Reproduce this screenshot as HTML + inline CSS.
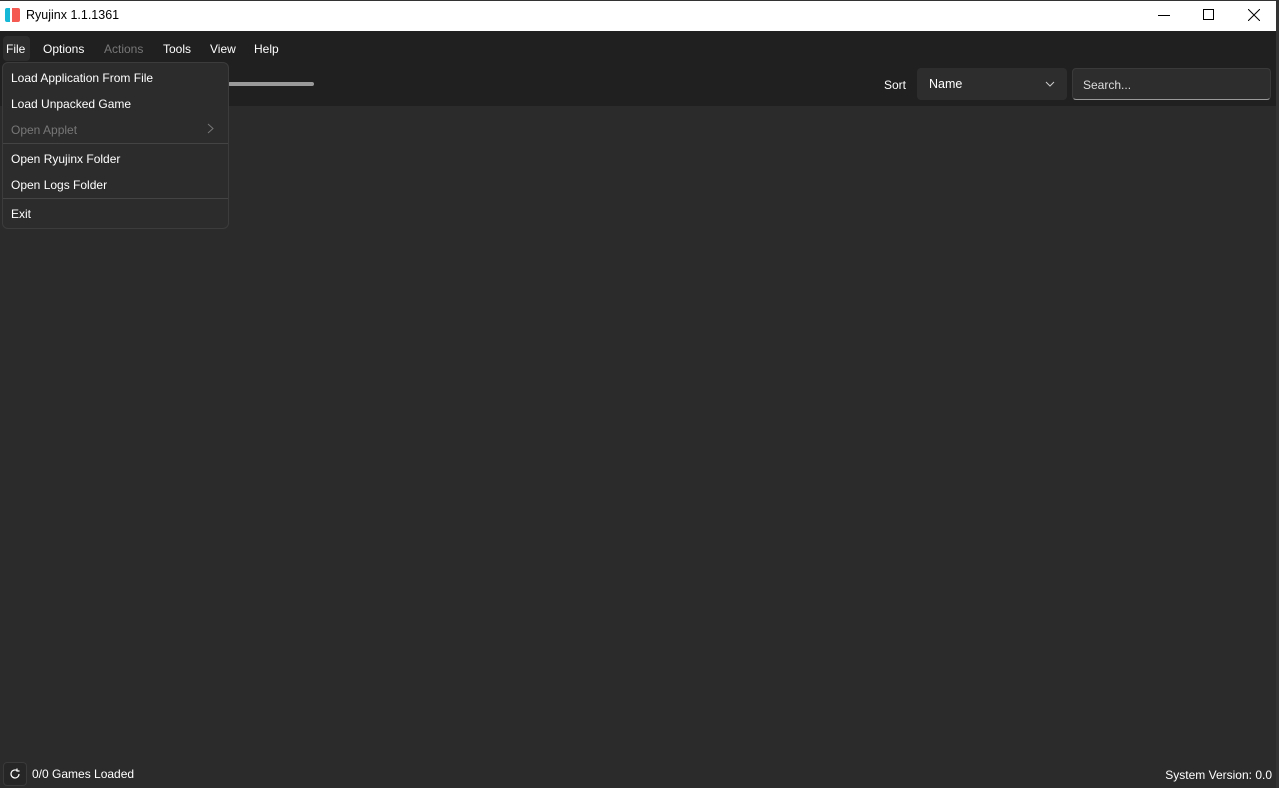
<!DOCTYPE html><html><head><style>
body{margin:0;width:1279px;height:788px;position:relative;overflow:hidden;background:#2b2b2b;font-family:"Liberation Sans",sans-serif;font-size:12px;color:#fff}
div{position:absolute;box-sizing:border-box}
.t{white-space:nowrap}
</style></head><body>
<div style="left:1276px;top:0;width:3px;height:788px;background:#333"></div>
<div style="left:0;top:0;width:1276px;height:31px;background:#fff;border-top:1px solid #333"></div>
<div style="left:5px;top:8px;width:5px;height:14px;background:#15b8d6;border-radius:2px 0 0 2px"></div>
<div style="left:12px;top:8px;width:8px;height:14px;background:#f55a52;border-radius:0 2px 2px 0"></div>
<div class="t" style="left:26px;top:8px;color:#000;font-size:12.5px">Ryujinx 1.1.1361</div>
<div style="left:1158px;top:15px;width:12px;height:1px;background:#000"></div>
<div style="left:1203px;top:9px;width:11px;height:11px;border:1px solid #000"></div>
<svg style="position:absolute;left:1248px;top:9px" width="12" height="12"><path d="M0 0L12 12M12 0L0 12" stroke="#000"/></svg>
<div style="left:0;top:31px;width:1276px;height:75px;background:#202020"></div>
<div style="left:3px;top:36px;width:27px;height:25px;background:#2d2d2d;border-radius:4px"></div>
<div class="t" style="left:6px;top:42px">File</div>
<div class="t" style="left:43px;top:42px">Options</div>
<div class="t" style="left:104px;top:42px;color:#777">Actions</div>
<div class="t" style="left:163px;top:42px">Tools</div>
<div class="t" style="left:210px;top:42px">View</div>
<div class="t" style="left:254px;top:42px">Help</div>
<div style="left:228px;top:82px;width:86px;height:4px;background:#9a9a9a;border-radius:2px"></div>
<div class="t" style="left:884px;top:78px">Sort</div>
<div style="left:917px;top:68px;width:150px;height:32px;background:#2d2d2d;border-radius:4px"></div>
<div class="t" style="left:929px;top:77px;font-size:12.5px">Name</div>
<svg style="position:absolute;left:1045px;top:81px" width="10" height="6"><path d="M1 1L5 5L9 1" stroke="#ccc" fill="none"/></svg>
<div style="left:1072px;top:68px;width:199px;height:32px;background:#2d2d2d;border-radius:4px;border:1px solid #3a3a3a;border-bottom-color:#9a9a9a"></div>
<div class="t" style="left:1083px;top:78px;color:#ddd">Search...</div>
<div style="left:2px;top:62px;width:227px;height:167px;background:#2c2c2c;border:1px solid #3c3c3c;border-radius:6px"></div>
<div class="t" style="left:11px;top:71px">Load Application From File</div>
<div class="t" style="left:11px;top:97px">Load Unpacked Game</div>
<div class="t" style="left:11px;top:123px;color:#777">Open Applet</div>
<svg style="position:absolute;left:207px;top:123px" width="7" height="11"><path d="M1 1L6 5.5L1 10" stroke="#777" fill="none"/></svg>
<div style="left:3px;top:143px;width:225px;height:1px;background:#444"></div>
<div class="t" style="left:11px;top:152px">Open Ryujinx Folder</div>
<div class="t" style="left:11px;top:178px">Open Logs Folder</div>
<div style="left:3px;top:198px;width:225px;height:1px;background:#444"></div>
<div class="t" style="left:11px;top:207px">Exit</div>
<div style="left:3px;top:762px;width:24px;height:24px;border:1px solid #3a3a3a;border-radius:4px;background:#262626"></div>
<svg style="position:absolute;left:9px;top:768px" width="12" height="12"><path d="M10 6A4 4 0 1 1 8 2.5M8 0.5V3H10.5" stroke="#fff" fill="none" stroke-width="1.2"/></svg>
<div class="t" style="left:32px;top:767px">0/0 Games Loaded</div>
<div class="t" style="right:7px;top:768px">System Version: 0.0</div>
</body></html>
